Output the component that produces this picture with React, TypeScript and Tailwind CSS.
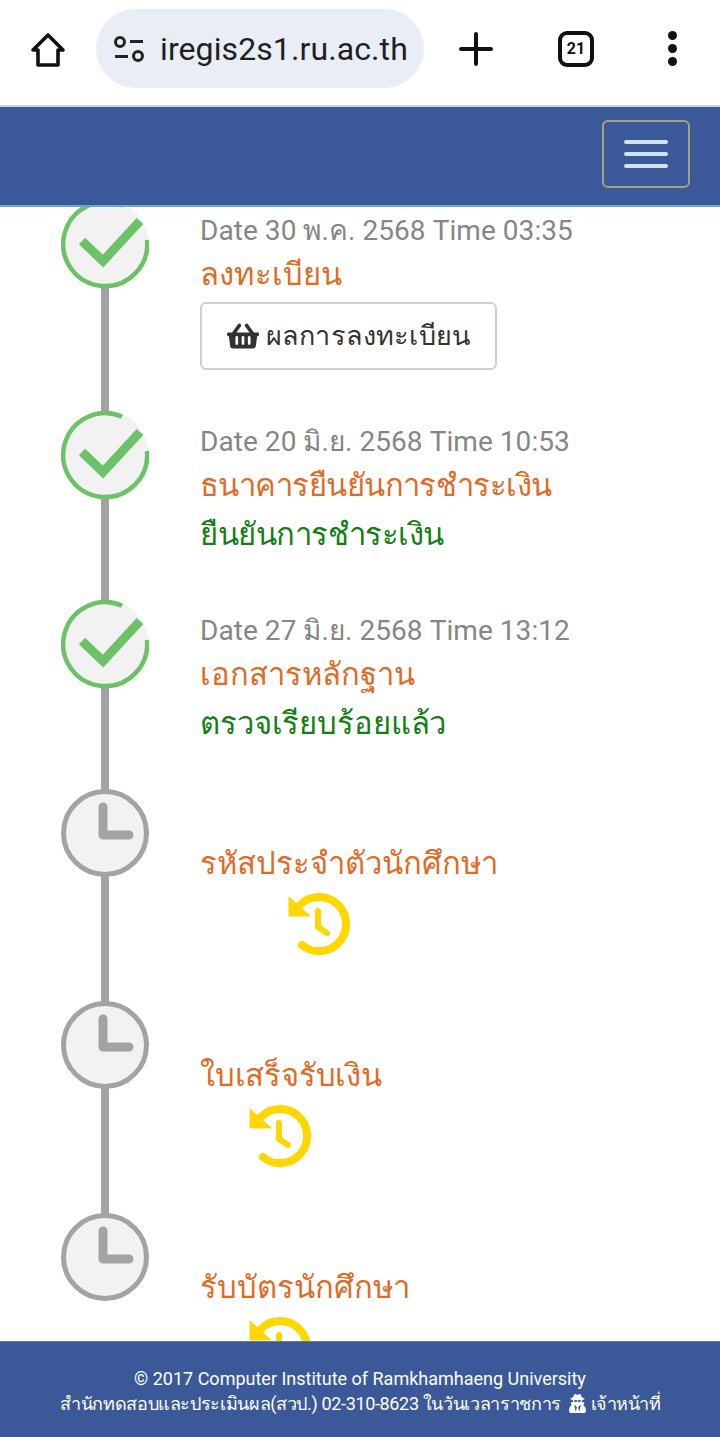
import React from 'react';
import { FaShoppingBasket, FaUserSecret } from 'react-icons/fa';

const sansStack = "font-['Roboto','Noto_Sans','DejaVu_Sans',sans-serif]";

const DoneBadge = () => (
    <svg viewBox="0 0 88 88" className="w-[88px] h-[88px] block">
        <circle cx="44" cy="44" r="44" fill="#f2f2f2" />
        <path d="M86 40 A42 42 0 1 1 61 5.6" fill="none" stroke="#6cc266" strokeWidth="4.5" />
        <path d="M21 41 L42 61 L79 21" fill="none" stroke="#6cc266" strokeWidth="9" />
    </svg>
);

const PendingBadge = () => (
    <svg viewBox="0 0 88 88" className="w-[88px] h-[88px] block">
        <circle cx="44" cy="44" r="41.5" fill="#f2f2f2" stroke="#a3a3a3" strokeWidth="5" />
        <path d="M42 18 V46 H68" fill="none" stroke="#a3a3a3" strokeWidth="9" strokeLinecap="round" strokeLinejoin="round" />
    </svg>
);

const HistoryIcon = () => (
    <svg viewBox="0 0 62 62" className="w-[62px] h-[62px] block">
        <path d="M1 4 V23 H22 Z" fill="#ffd700" stroke="#ffd700" strokeWidth="1" strokeLinejoin="round" />
        <path d="M12 12 A27 27 0 1 1 14 52" fill="none" stroke="#ffd700" strokeWidth="8" strokeLinecap="round" />
        <path d="M30 18 V34 L39 40" fill="none" stroke="#ffd700" strokeWidth="6" strokeLinecap="round" strokeLinejoin="round" />
    </svg>
);

type Step = {
    date?: string;
    title: string;
    done: boolean;
    status?: string;
    button?: boolean;
    historyOffset?: string;
    height: string;
    titleClass?: string;
    statusClass?: string;
};

const steps: Step[] = [
    { date: 'Date 30 พ.ค. 2568 Time 03:35', title: 'ลงทะเบียน', titleClass: 'tracking-[0.2px]', done: true, button: true, height: 'h-[211px]' },
    { date: 'Date 20 มิ.ย. 2568 Time 10:53', title: 'ธนาคารยืนยันการชำระเงิน', titleClass: 'tracking-[-0.55px]', done: true, status: 'ยืนยันการชำระเงิน', statusClass: 'tracking-[-0.5px]', height: 'h-[189px]' },
    { date: 'Date 27 มิ.ย. 2568 Time 13:12', title: 'เอกสารหลักฐาน', done: true, status: 'ตรวจเรียบร้อยแล้ว', statusClass: 'tracking-[-0.12px]', height: 'h-[189px]' },
    { title: 'รหัสประจำตัวนักศึกษา', done: false, historyOffset: 'ml-[88px]', height: 'h-[212px]' },
    { title: 'ใบเสร็จรับเงิน', titleClass: 'tracking-[-0.2px]', done: false, historyOffset: 'ml-[49px]', height: 'h-[212px]' },
    { title: 'รับบัตรนักศึกษา', done: false, historyOffset: 'ml-[49px]', height: 'h-[212px]' },
];

const App = () => {
    return (
        <div className={`h-[1437px] w-[720px] flex flex-col bg-white overflow-hidden ${sansStack}`}>
            {/* browser toolbar */}
            <div className="h-[105px] flex items-center shrink-0 bg-white pb-[8px]">
                <svg viewBox="0 0 36 36" className="w-[36px] h-[36px] ml-[30px] mt-[2px]" fill="none" stroke="#111" strokeWidth="3.6" strokeLinejoin="round">
                    <path d="M18 3 L33 18 H28 V33 H8 V18 H3 Z" />
                </svg>
                <div className="ml-[30px] w-[328px] h-[79px] rounded-[40px] bg-[#e9eef6] flex items-center pl-[17px]">
                    <svg viewBox="0 0 32 28" className="w-[32px] h-[28px]" fill="none" stroke="#222" strokeWidth="3">
                        <circle cx="7" cy="7" r="4.5" />
                        <path d="M17 6.5 H30 M2 21.5 H15" />
                        <circle cx="25" cy="21" r="4.5" />
                    </svg>
                    <span className="ml-[15px] text-[32px] tracking-[0.1px] text-[#1f1f1f] w-[247px] overflow-hidden whitespace-nowrap">iregis2s1.ru.ac.th</span>
                </div>
                <svg viewBox="0 0 36 36" className="w-[36px] h-[36px] ml-[34px]" fill="none" stroke="#111" strokeWidth="4" strokeLinecap="round">
                    <path d="M18 3 V33 M3 18 H33" />
                </svg>
                <div className="ml-[64px] w-[36px] h-[36px] rounded-[9px] border-4 border-[#111] flex items-center justify-center text-[16px] font-bold text-[#111]">21</div>
                <div className="ml-[74px] flex flex-col gap-[4px]">
                    <span className="w-[9px] h-[9px] rounded-full bg-[#111]" />
                    <span className="w-[9px] h-[9px] rounded-full bg-[#111]" />
                    <span className="w-[9px] h-[9px] rounded-full bg-[#111]" />
                </div>
            </div>

            {/* navbar */}
            <div className="h-[102px] shrink-0 bg-[#3b5998] border-t-2 border-t-[#c5d3e6] border-b-2 border-b-[#6aa9c9] flex items-center justify-end pr-[30px] pb-[4px]">
                <button className="w-[88px] h-[68px] rounded-[6px] border-2 border-[#a79f83] flex flex-col items-center justify-center gap-[8px]">
                    <span className="w-[44px] h-[4px] rounded-sm bg-[#d4e2f0]" />
                    <span className="w-[44px] h-[4px] rounded-sm bg-[#d4e2f0]" />
                    <span className="w-[44px] h-[4px] rounded-sm bg-[#d4e2f0]" />
                </button>
            </div>

            {/* timeline */}
            <div className="flex-1 min-h-0 overflow-hidden">
                <div className="-mt-[7px] pl-[61px]">
                    {steps.map((step, i) => (
                        <div key={i} className={`flex ${step.height}`}>
                            <div className="w-[88px] shrink-0 relative">
                                {i < steps.length - 1 && <div className="absolute left-[40px] top-[44px] w-[8px] h-[220px] bg-[#a3a3a3]" />}
                                <div className="relative">{step.done ? <DoneBadge /> : <PendingBadge />}</div>
                            </div>
                            <div className="ml-[51px] pt-[13px] flex-1 min-w-0">
                                <div className="h-[36px] text-[28px] tracking-[0.06px] leading-[36px] text-[#868686]">{step.date}</div>
                                <div className={`mt-[6px] text-[31px] leading-[40px] text-[#df6b26] ${step.titleClass ?? ''}`}>{step.title}</div>
                                {step.button && (
                                    <button className="mt-[7px] w-[297px] h-[68px] rounded-[6px] border-2 border-[#cfcfcf] bg-white flex items-center justify-center gap-[7px] text-[27px] tracking-[0.15px] text-[#333]">
                                        <FaShoppingBasket className="w-[32px] h-[32px]" />
                                        ผลการลงทะเบียน
                                    </button>
                                )}
                                {step.status && <div className={`mt-[9px] text-[31px] leading-[40px] text-[#128012] ${step.statusClass ?? ''}`}>{step.status}</div>}
                                {step.historyOffset && (
                                    <div className={`mt-[9px] ${step.historyOffset}`}><HistoryIcon /></div>
                                )}
                            </div>
                        </div>
                    ))}
                </div>
            </div>

            {/* footer */}
            <div className="h-[96px] shrink-0 bg-[#3b5998] border-t border-t-[#5b7bb0] text-white text-center text-[18px] leading-[25px] pt-[24px]">
                <div>© 2017 Computer Institute of Ramkhamhaeng University</div>
                <div className="flex items-center justify-center gap-[5px]">
                    <span className="tracking-[-0.35px]">สำนักทดสอบและประเมินผล(สวป.) 02-310-8623 ในวันเวลาราชการ</span>
                    <FaUserSecret className="w-[17px] h-[19px] ml-[3px]" />
                    <span className="tracking-[-0.55px]">เจ้าหน้าที่</span>
                </div>
            </div>
        </div>
    );
};

export default App;
